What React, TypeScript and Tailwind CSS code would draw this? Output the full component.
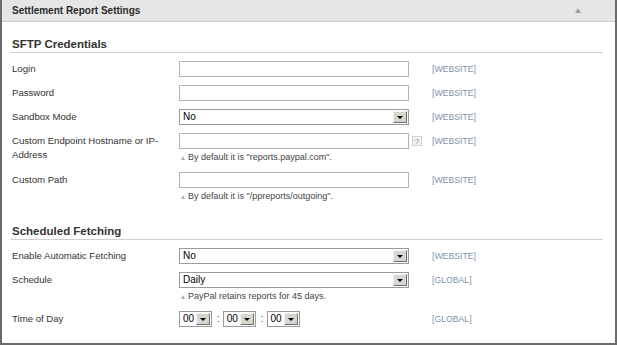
import React from "react";

const SCOPE_CLS = "w-[150px] leading-[16px] text-[8.7px] text-[#7d93a8]";

function SelectBox({ value, width }: { value: string; width: string }) {
  return (
    <div className={`${width} h-[16px] flex items-center border border-[#9a9a9a] bg-white pl-[3px] pr-[1px]`}>
      <span className="flex-1 text-[10px] leading-[14px] text-black">{value}</span>
      <span className="w-[14px] h-[12px] flex items-center justify-center bg-[#d8d5cf] border-t border-l border-[#f4f4f4] border-r border-b border-r-[#6e6e6e] border-b-[#6e6e6e]">
        <span className="w-0 h-0 border-l-[3px] border-r-[3px] border-t-[3px] border-l-transparent border-r-transparent border-t-black" />
      </span>
    </div>
  );
}

function TextBox() {
  return <div className="w-[230px] h-[16px] border border-[#b5b5b5] bg-white" />;
}

function Hint({ children }: { children: React.ReactNode }) {
  return (
    <div className="mt-[2px] flex items-center leading-[13px] text-[9px] text-[#444]">
      <span className="ml-[2px] mr-[3px] w-0 h-0 border-l-[2.5px] border-r-[2.5px] border-b-[4px] border-l-transparent border-r-transparent border-b-[#b0b0b0]" />
      {children}
    </div>
  );
}

function Row({
  label,
  twoLine,
  control,
  hint,
  help,
  scope,
}: {
  label: string;
  twoLine?: boolean;
  control: React.ReactNode;
  hint?: string;
  help?: boolean;
  scope: string;
}) {
  return (
    <div className="flex items-start py-[4px]">
      <div
        className={
          twoLine
            ? "w-[169px] pl-[2px] pr-[8px] pt-[1px] leading-[14px] text-[9.6px] text-[#333]"
            : "w-[169px] pl-[2px] leading-[16px] text-[9.6px] text-[#333]"
        }
      >
        {label}
      </div>
      <div className="w-[230px]">
        {control}
        {hint && <Hint>{hint}</Hint>}
      </div>
      <div className="w-[23px] pl-[3px] pt-[3px]">
        {help && (
          <div className="w-[10px] h-[10px] flex items-center justify-center border border-[#d2d2d2] bg-[#f0f0f0] text-[7px] leading-none text-[#888]">
            ?
          </div>
        )}
      </div>
      <div className={SCOPE_CLS}>{scope}</div>
    </div>
  );
}

function Section({ title, className, children }: { title: string; className: string; children: React.ReactNode }) {
  return (
    <div className={className}>
      <div className="pl-[2px] pb-[1px] leading-[13px] text-[11.5px] font-bold text-[#333] border-b border-[#cfcfcf]">
        {title}
      </div>
      <div className="pt-[4px]">{children}</div>
    </div>
  );
}

function Colon() {
  return <span className="ml-[5px] mr-[3px] text-[10px] text-[#555] leading-[16px]">:</span>;
}

export default function App() {
  return (
    <div className="w-[617px] h-[345px] bg-white border-x-2 border-b-2 border-[#6a6a6a] font-['Liberation_Sans',Arial,sans-serif]">
      <div className="h-[22px] flex items-center justify-between bg-[#e6e6e6] border-b border-[#cdcdcd] pl-[10px] pr-[34px]">
        <span className="font-['Liberation_Sans_Narrow','Arial_Narrow',sans-serif] text-[10px] font-bold text-[#2b2b2b]">
          Settlement Report Settings
        </span>
        <span className="w-0 h-0 border-l-[3px] border-r-[3px] border-b-[5px] border-l-transparent border-r-transparent border-b-[#a0a0a0]" />
      </div>

      <div className="pl-[8px] pr-[12px]">
        <Section title="SFTP Credentials" className="mt-[16px]">
          <Row label="Login" control={<TextBox />} scope="[WEBSITE]" />
          <Row label="Password" control={<TextBox />} scope="[WEBSITE]" />
          <Row label="Sandbox Mode" control={<SelectBox value="No" width="w-[230px]" />} scope="[WEBSITE]" />
          <Row
            label="Custom Endpoint Hostname or IP-Address"
            twoLine
            control={<TextBox />}
            hint={'By default it is "reports.paypal.com".'}
            help
            scope="[WEBSITE]"
          />
          <Row
            label="Custom Path"
            control={<TextBox />}
            hint={'By default it is "/ppreports/outgoing".'}
            scope="[WEBSITE]"
          />
        </Section>

        <Section title="Scheduled Fetching" className="mt-[18px]">
          <Row label="Enable Automatic Fetching" control={<SelectBox value="No" width="w-[230px]" />} scope="[WEBSITE]" />
          <Row
            label="Schedule"
            control={<SelectBox value="Daily" width="w-[230px]" />}
            hint="PayPal retains reports for 45 days."
            scope="[GLOBAL]"
          />
          <Row
            label="Time of Day"
            control={
              <div className="flex items-center">
                <SelectBox value="00" width="w-[33px]" />
                <Colon />
                <SelectBox value="00" width="w-[33px]" />
                <Colon />
                <SelectBox value="00" width="w-[33px]" />
              </div>
            }
            scope="[GLOBAL]"
          />
        </Section>
      </div>
    </div>
  );
}
